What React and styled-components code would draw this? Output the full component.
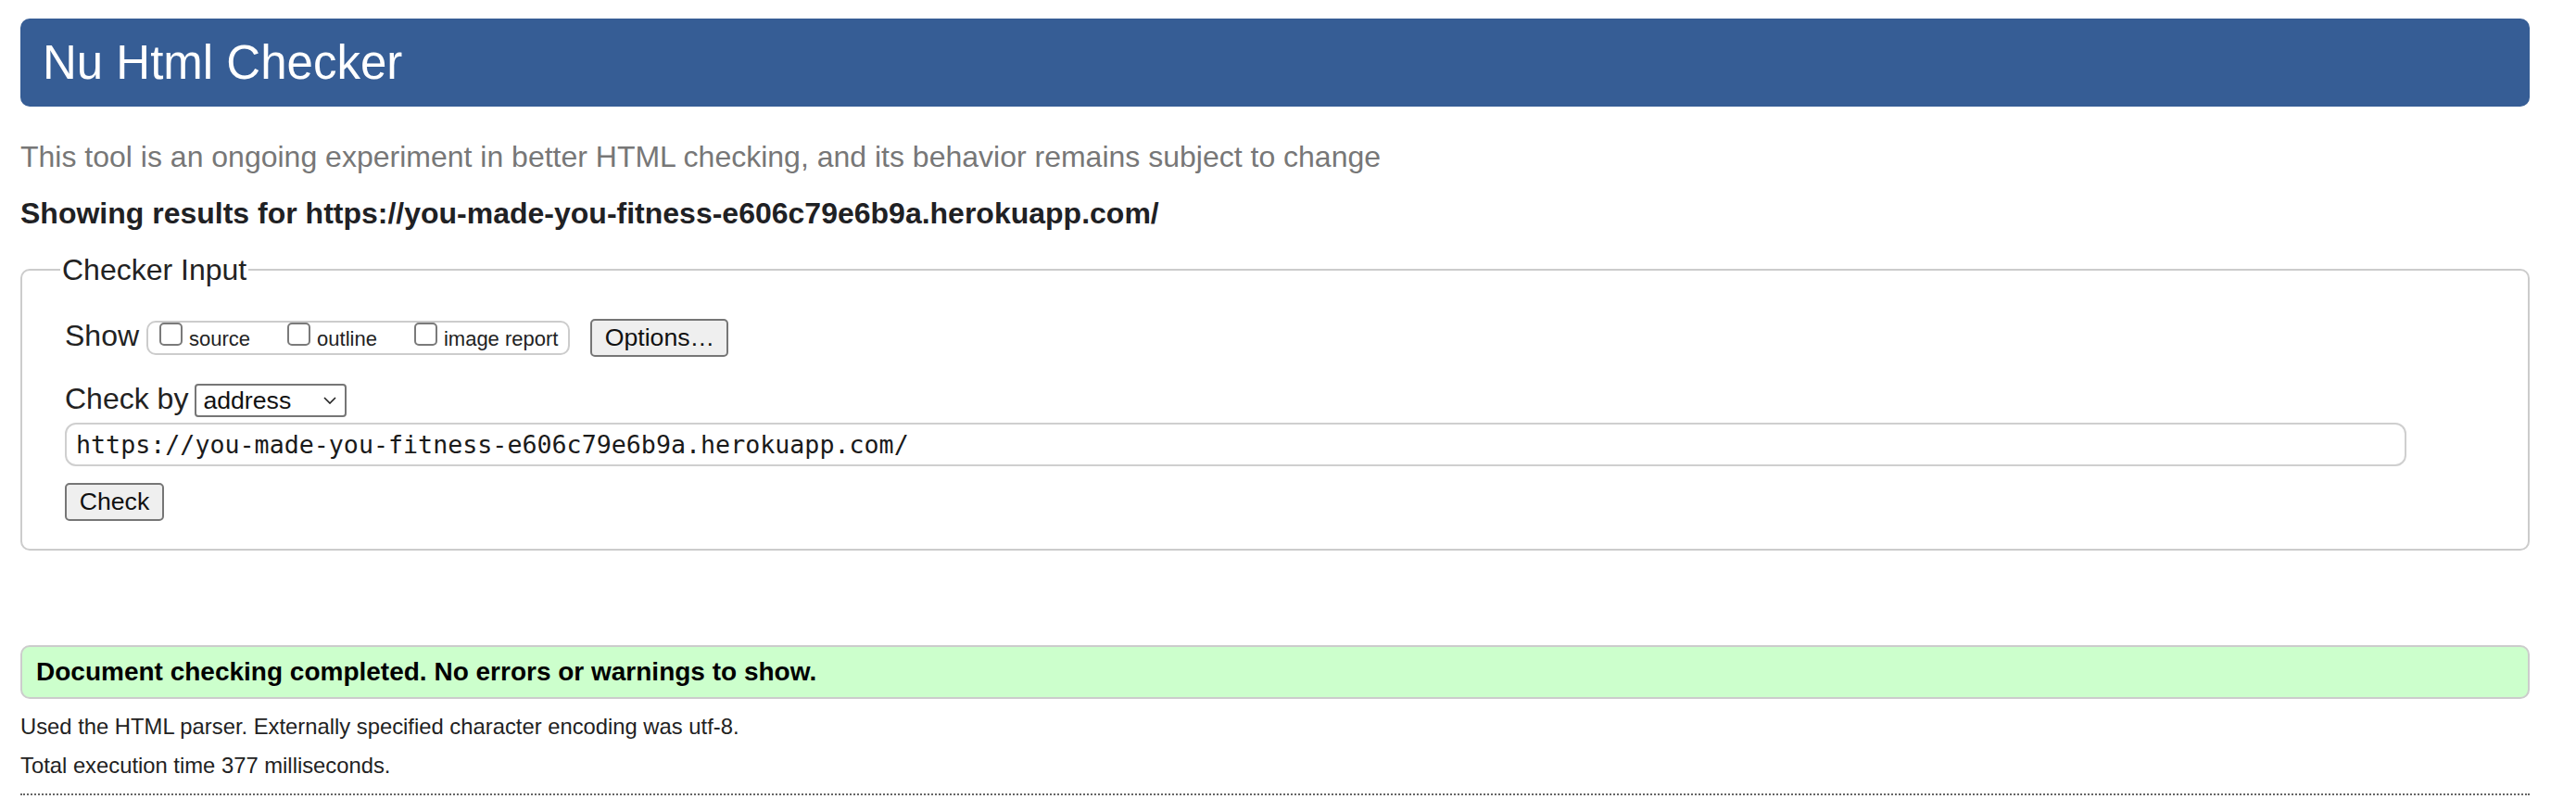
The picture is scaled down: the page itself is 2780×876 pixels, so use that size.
import React from "react";
import styled, { createGlobalStyle } from "styled-components";

const Global = createGlobalStyle`
  html, body { margin: 0; padding: 0; background: #fff; }
  body { font-family: "Liberation Sans", Arial, Helvetica, sans-serif; color: #222; }
  * { box-sizing: border-box; }
`;

const Page = styled.main`
  display: flex;
  flex-direction: column;
  padding: 20px 50px 0 22px;
`;

const Header = styled.header`
  height: 95px;
  background: #365d95;
  border-radius: 10px;
  display: flex;
  align-items: center;
  padding-left: 24px;
`;

const Title = styled.h1`
  margin: 0;
  font-size: 51px;
  font-weight: 400;
  line-height: 95px;
  color: #fff;
`;

const Intro = styled.p`
  margin: 34px 0 0;
  font-size: 32px;
  line-height: 40px;
  color: #777777;
`;

const ResultsFor = styled.p`
  margin: 21px 0 0;
  font-size: 32px;
  line-height: 40px;
  font-weight: 700;
  color: #1f2124;
`;

const Fieldset = styled.fieldset`
  margin: 21px 0 0;
  padding: 31px 131px 30px 46px;
  border: 2px solid #cccccc;
  border-radius: 10px;
  min-width: 0;
  display: flex;
  flex-direction: column;
  align-items: flex-start;
`;

const Legend = styled.legend`
  margin-left: -5px;
  padding: 0 2px;
  font-size: 32px;
  line-height: 40px;
  color: #222;
`;

const Row = styled.div`
  display: flex;
  align-items: baseline;
  gap: ${(p) => p.$gap}px;
  margin-top: ${(p) => p.$top || 0}px;
`;

const RowLabel = styled.span`
  font-size: 32px;
  line-height: 40px;
  color: #222;
`;

const CheckGroup = styled.div`
  display: flex;
  align-items: baseline;
  gap: 40px;
  padding: 0 11px 3px 12px;
  border: 2px solid #cccccc;
  border-radius: 10px;
`;

const OptionLabel = styled.label`
  display: flex;
  align-items: baseline;
  gap: 7px;
  font-size: 22px;
  line-height: 25px;
  color: #222;
`;

const Box = styled.input`
  appearance: none;
  -webkit-appearance: none;
  display: inline-block;
  margin: 0;
  width: 25px;
  height: 25px;
  border: 2px solid #7a7a7a;
  border-radius: 5px;
  background: #fff;
`;

const Button = styled.button`
  height: 41px;
  width: ${(p) => p.$w}px;
  margin-left: ${(p) => p.$left || 0}px;
  padding: 0;
  font-family: "Liberation Sans", Arial, sans-serif;
  font-size: 26.67px;
  color: #111;
  background: #efefef;
  border: 2px solid #767676;
  border-radius: 5px;
  text-align: center;
`;

const SelectWrap = styled.span`
  position: relative;
  display: inline-flex;
`;

const Select = styled.select`
  appearance: none;
  -webkit-appearance: none;
  width: 164px;
  height: 36px;
  padding: 0 0 0 7px;
  margin: 0;
  font-family: "Liberation Sans", Arial, sans-serif;
  font-size: 26.67px;
  color: #111;
  background: #fff;
  border: 2px solid #767676;
  border-radius: 4px;
`;

const Chevron = styled.svg`
  position: absolute;
  right: 11px;
  top: 14px;
  pointer-events: none;
`;

const UrlInput = styled.input`
  margin-top: 6px;
  width: 100%;
  height: 47px;
  padding: 0 10px;
  font-family: "DejaVu Sans Mono", "Liberation Mono", monospace;
  font-size: 26.67px;
  color: #1a1a1a;
  border: 2px solid #cfcfcf;
  border-radius: 12px;
  background: #fff;
  outline: none;
`;

const Success = styled.div`
  margin-top: 102px;
  height: 58px;
  padding-left: 15px;
  background: #ccffcc;
  border: 2px solid #cccccc;
  border-radius: 10px;
  font-size: 28px;
  font-weight: 700;
  line-height: 54px;
  color: #000;
`;

const Detail = styled.p`
  margin: ${(p) => p.$top}px 0 0;
  font-size: 23.8px;
  line-height: 30px;
  color: #222;
`;

const Rule = styled.hr`
  margin: 15px 0 0;
  height: 0;
  border: 0;
  border-top: 2px dotted #666;
`;

const options = ["source", "outline", "image report"];

export default function App() {
  return (
    <>
      <Global />
      <Page>
        <Header>
          <Title>Nu Html Checker</Title>
        </Header>
        <Intro>
          This tool is an ongoing experiment in better HTML checking, and its behavior remains subject to change
        </Intro>
        <ResultsFor>Showing results for https://you-made-you-fitness-e606c79e6b9a.herokuapp.com/</ResultsFor>
        <Fieldset>
          <Legend>Checker Input</Legend>
          <Row $gap={8}>
            <RowLabel>Show</RowLabel>
            <CheckGroup>
              {options.map((o) => (
                <OptionLabel key={o}>
                  <Box type="checkbox" />
                  {o}
                </OptionLabel>
              ))}
            </CheckGroup>
            <Button $w={149} $left={14}>Options…</Button>
          </Row>
          <Row $gap={7} $top={25}>
            <RowLabel>Check by</RowLabel>
            <SelectWrap>
              <Select defaultValue="address">
                <option value="address">address</option>
                <option value="file">file upload</option>
                <option value="text">text input</option>
              </Select>
              <Chevron width="14" height="8" viewBox="0 0 14 8">
                <polyline points="1,1 7,7 13,1" fill="none" stroke="#222" strokeWidth="1.6" />
              </Chevron>
            </SelectWrap>
          </Row>
          <UrlInput type="url" defaultValue="https://you-made-you-fitness-e606c79e6b9a.herokuapp.com/" />
          <Row $gap={0} $top={18}>
            <Button $w={107}>Check</Button>
          </Row>
        </Fieldset>
        <Success>Document checking completed. No errors or warnings to show.</Success>
        <Detail $top={15}>Used the HTML parser. Externally specified character encoding was utf-8.</Detail>
        <Detail $top={12}>Total execution time 377 milliseconds.</Detail>
        <Rule />
      </Page>
    </>
  );
}
